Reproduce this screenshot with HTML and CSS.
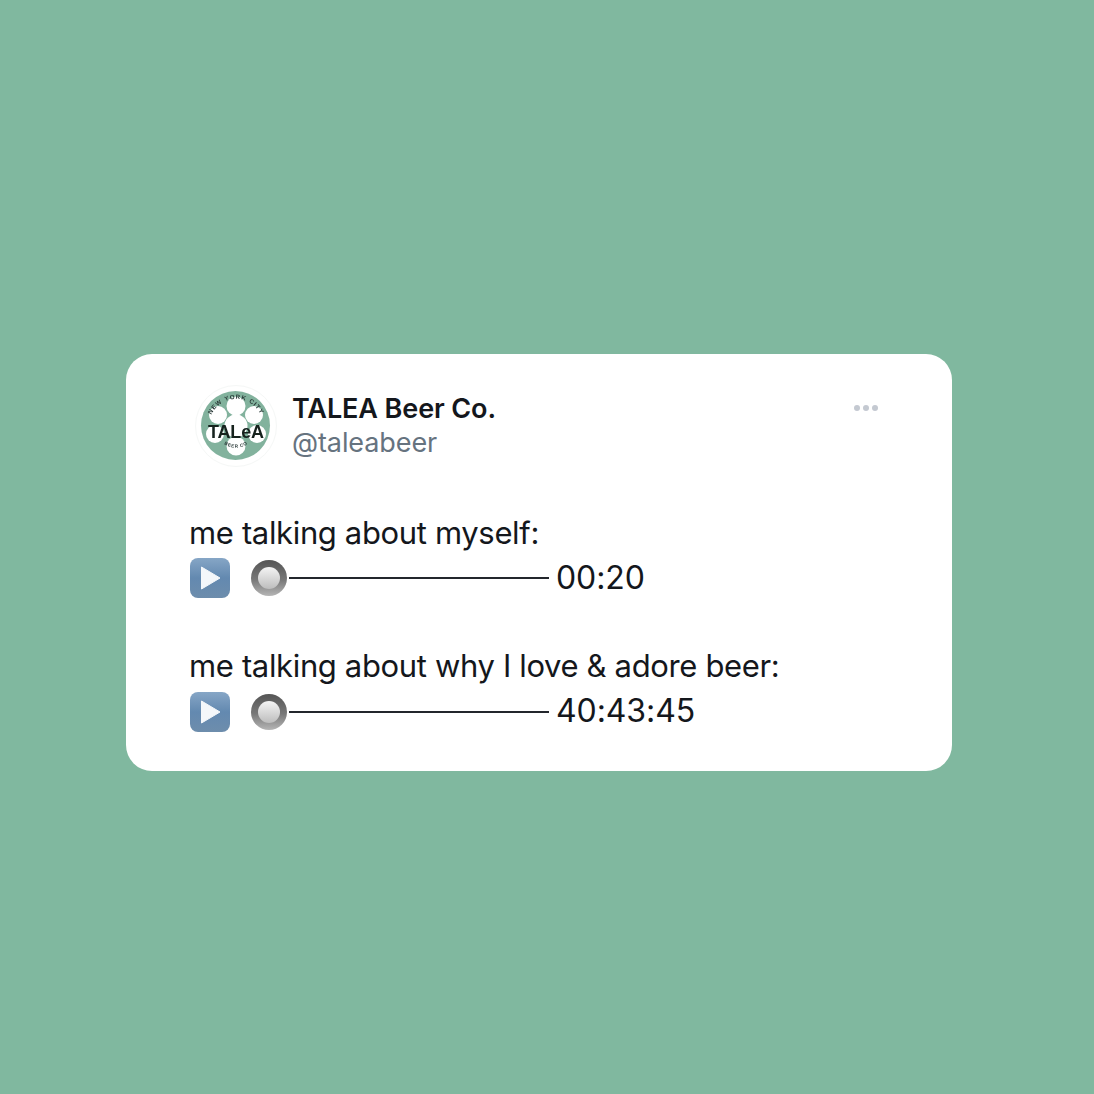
FILE: index.html
```html
<!DOCTYPE html>
<html lang="en">
<head>
<meta charset="utf-8">
<title>TALEA Beer Co.</title>
<link rel="stylesheet" href="styles.css">
</head>
<body>
<main class="card">
  <header class="head">
    <svg class="avatar" viewBox="0 0 84 84" aria-hidden="true">
      <defs>
        <path id="arcTop" d="M15 42 A27 27 0 0 1 69 42"/>
        <path id="arcBottom" d="M25 55 A21 21 0 0 0 59 55"/>
        <filter id="soft"><feGaussianBlur stdDeviation="0.4"/></filter>
      </defs>
      <circle cx="42" cy="42" r="40.5" fill="#fff" stroke="#f5f7f6" stroke-width="1"/>
      <g filter="url(#soft)">
        <circle cx="41.5" cy="41.5" r="34.5" fill="#82b29d"/>
        <circle cx="42" cy="22" r="9.5" fill="#fff"/>
        <circle cx="24" cy="31" r="9" fill="#fff"/>
        <circle cx="60" cy="31" r="9" fill="#fff"/>
        <circle cx="21" cy="50" r="9" fill="#fff"/>
        <circle cx="63" cy="50" r="9" fill="#fff"/>
        <circle cx="42" cy="42" r="11.5" fill="#fff"/>
        <circle cx="42" cy="62" r="9.5" fill="#fff"/>
        <text class="logo-arc"><textPath href="#arcTop" startOffset="50%" text-anchor="middle">NEW YORK CITY</textPath></text>
        <text class="logo-arc logo-arc-small"><textPath href="#arcBottom" startOffset="50%" text-anchor="middle">BEER CO</textPath></text>
        <text class="logo-word" x="14" y="54" textLength="56">TALeA</text>
      </g>
    </svg>
    <div class="who">
      <div class="name">TALEA Beer Co.</div>
      <div class="handle">@taleabeer</div>
    </div>
    <div class="more" aria-hidden="true"><i></i><i></i><i></i></div>
  </header>
  <section class="post">
    <p class="line">me talking about myself:</p>
    <div class="line player">
      <svg class="play" viewBox="0 0 40 40" aria-hidden="true"><use href="#playIcon"/></svg>
      <svg class="knob" viewBox="0 0 36 36" aria-hidden="true"><use href="#knobIcon"/></svg>
      <span class="track"></span>
      <span class="time">00:20</span>
    </div>
    <p class="line gap">me talking about why I love &amp; adore beer:</p>
    <div class="line player">
      <svg class="play" viewBox="0 0 40 40" aria-hidden="true"><use href="#playIcon"/></svg>
      <svg class="knob" viewBox="0 0 36 36" aria-hidden="true"><use href="#knobIcon"/></svg>
      <span class="track"></span>
      <span class="time">40:43:45</span>
    </div>
  </section>
</main>
<svg class="defs" aria-hidden="true">
  <defs>
    <linearGradient id="playBg" x1="0" y1="0" x2="0" y2="1">
      <stop offset="0" stop-color="#86a6c6"/>
      <stop offset="0.5" stop-color="#6389b0"/>
      <stop offset="1" stop-color="#6d8dac"/>
    </linearGradient>
    <linearGradient id="knobRing" x1="0" y1="0" x2="0" y2="1">
      <stop offset="0" stop-color="#555"/>
      <stop offset="0.55" stop-color="#787878"/>
      <stop offset="1" stop-color="#b5b5b5"/>
    </linearGradient>
    <linearGradient id="knobCore" x1="0" y1="0" x2="0" y2="1">
      <stop offset="0" stop-color="#f4f4f4"/>
      <stop offset="1" stop-color="#bdbdbd"/>
    </linearGradient>
    <g id="playIcon">
      <rect x="0" y="0" width="40" height="40" rx="8" fill="url(#playBg)"/>
      <path d="M11.5 9 L30 20 L11.5 31 Z" fill="#f4f7fa" stroke="#f4f7fa" stroke-width="1" stroke-linejoin="round"/>
    </g>
    <g id="knobIcon">
      <circle cx="18" cy="18" r="18" fill="url(#knobRing)"/>
      <circle cx="18" cy="18" r="11" fill="url(#knobCore)"/>
    </g>
  </defs>
</svg>
</body>
</html>
```
FILE: styles.css
```css
* { box-sizing: border-box; }
html, body { margin: 0; height: 100%; }
body {
  background: #80b89f;
  padding: 354px 0 0 126px;
  font-family: Inter, "Liberation Sans", sans-serif;
  color: #14171c;
}
.card {
  width: 826px;
  height: 417px;
  background: #fff;
  border-radius: 26px;
  padding: 30px 63px 0;
}
.head { display: flex; align-items: flex-start; }
.avatar { width: 84px; height: 84px; margin-left: 5px; flex: none; }
.logo-arc { font: 700 6.2px "Liberation Sans", sans-serif; letter-spacing: .9px; fill: #2a3a38; }
.logo-arc-small { font-size: 4.6px; letter-spacing: .6px; }
.logo-word { font: 700 18px "Liberation Sans", sans-serif; fill: #16211f; }
.who { margin-left: 14px; padding-top: 8px; }
.name { font-size: 27px; line-height: 34px; font-weight: 600; letter-spacing: -.1px; }
.handle { font-size: 27px; line-height: 34px; color: #66737f; letter-spacing: -.1px; }
.more { display: flex; gap: 3px; margin-left: auto; margin-right: 11px; padding-top: 21px; }
.more i { width: 6px; height: 6px; border-radius: 50%; background: #c4c9d1; }
.post { margin-top: 43px; font-size: 31px; letter-spacing: -.35px; }
.line { margin: 0; height: 44.3px; line-height: 44.3px; white-space: nowrap; }
.gap { margin-top: 44.5px; }
.player { display: flex; align-items: center; padding-top: 2px; }
.play { width: 40px; height: 40px; margin-left: 1px; flex: none; }
.knob { width: 36px; height: 36px; margin-left: 21px; flex: none; }
.track { width: 260px; height: 2px; background: #23262c; margin-left: 2px; flex: none; }
.time { margin-left: 7px; font-size: 32px; letter-spacing: -.1px; }
.defs { position: absolute; width: 0; height: 0; }
```
